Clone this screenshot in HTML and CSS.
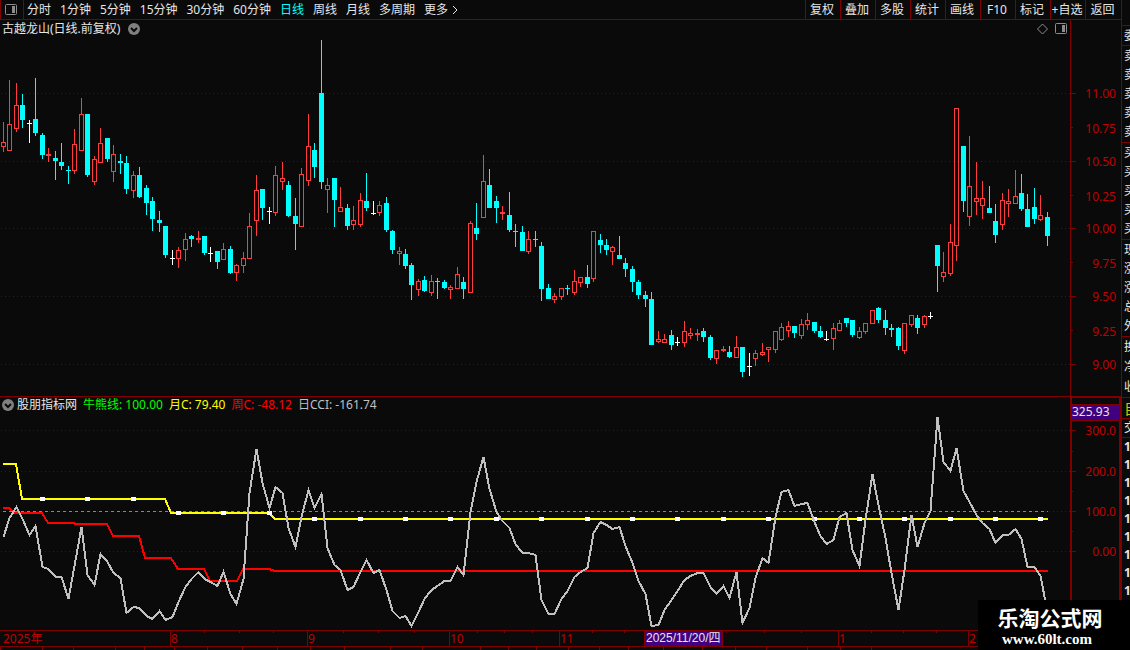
FILE: index.html
```html
<!DOCTYPE html>
<html lang="zh-CN">
<head>
    <meta charset="UTF-8">
    <meta name="viewport" content="width=device-width, initial-scale=1.0">
    <title>古越龙山 日线</title>
    <link rel="stylesheet" href="styles.css">
</head>
<body>
    <div class="main">
        <div class="toolbar">
            <button class="layout-btn" aria-label="布局">
                <svg width="12" height="12" viewBox="0 0 12 12"><rect x="0.5" y="0.5" width="11" height="10" rx="1" class="icon-line"/><rect x="7" y="2" width="3" height="7" class="icon-fill"/></svg>
            </button>
            <div class="periods">
                <button>分时</button>
                <button>1分钟</button>
                <button>5分钟</button>
                <button>15分钟</button>
                <button>30分钟</button>
                <button>60分钟</button>
                <button class="active">日线</button>
                <button>周线</button>
                <button>月线</button>
                <button>多周期</button>
                <button class="more">更多<svg width="6" height="10" viewBox="0 0 6 10"><path d="M1 1L5 5L1 9" class="arrow"/></svg></button>
            </div>
            <div class="tools">
                <button>复权</button>
                <button>叠加</button>
                <button>多股</button>
                <button>统计</button>
                <button>画线</button>
                <button>F10</button>
                <button>标记</button>
                <button>+自选</button>
                <button>返回</button>
            </div>
        </div>

        <div class="panel">
            <div class="panel-head">
                <span>古越龙山(日线.前复权)</span>
                <svg class="drop" width="12" height="12" viewBox="0 0 12 12"><circle cx="6" cy="6" r="6"/><path d="M3 5L6 8L9 5"/></svg>
                <svg class="head-icons" width="30" height="12" viewBox="0 0 30 12"><path d="M5.5 1L10.5 6L5.5 11L0.5 6Z" class="icon-line"/><rect x="18.5" y="0.5" width="11" height="10" rx="1" class="icon-line"/><rect x="25" y="2" width="3" height="7" class="icon-fill"/></svg>
            </div>
            <svg id="price" class="chart" viewBox="0 20 1121 376"></svg>
        </div>

        <div class="panel">
            <div class="panel-head indicator-head">
                <svg class="drop" width="12" height="12" viewBox="0 0 12 12"><circle cx="6" cy="6" r="6"/><path d="M3 5L6 8L9 5"/></svg>
                <span>股朋指标网</span>
                <span class="green">牛熊线: 100.00</span>
                <span class="yellow">月C: 79.40</span>
                <span class="red">周C: -48.12</span>
                <span class="gray">日CCI: -161.74</span>
            </div>
            <svg id="cci" class="chart" viewBox="0 396 1121 251"></svg>
        </div>

        <div class="tabs" id="tabs"></div>
    </div>

    <div class="quote">
        <div class="group g-head"></div>
        <div class="group g-one"><span>委</span></div>
        <div class="group g-five"><span>卖</span><span>卖</span><span>卖</span><span>卖</span><span>卖</span></div>
        <div class="group g-five"><span>买</span><span>买</span><span>买</span><span>买</span><span>买</span></div>
        <div class="group g-five"><span>现</span><span>涨</span><span>涨</span><span>总</span><span>外</span></div>
        <div class="group g-three"><span>换</span><span>净</span><span>收</span></div>
        <div class="group g-self"><span>自</span></div>
        <div class="group g-deal"><span>交</span></div>
        <div class="ticks">
            <span>1</span><span>1</span><span>1</span><span>1</span><span>1</span><span>1</span><span>1</span><span>1</span><span>1</span>
        </div>
    </div>

    <div class="watermark">
        <div class="wm-name">乐淘公式网</div>
        <div class="wm-url">www.60lt.com</div>
    </div>

    <script src="chart.js"></script>
</body>
</html>
```
FILE: styles.css
```css
* {
    box-sizing: border-box;
}

body {
    margin: 0;
    display: flex;
    height: 100vh;
    overflow: hidden;
    position: relative;
    background: #0a0a0a;
    color: #e6e6e6;
    font-family: "Noto Sans", "Noto Sans CJK SC", sans-serif;
    font-size: 12px;
    line-height: 18px;
}

button {
    padding: 0;
    border: 0;
    background: none;
    color: inherit;
    font: inherit;
    white-space: nowrap;
}

.main {
    flex: 1;
    min-width: 0;
}

/* toolbar */
.toolbar {
    display: flex;
    height: 20px;
    border-left: 1px solid #800000;
    border-bottom: 1px solid #800000;
}

.layout-btn {
    display: flex;
    align-items: center;
    justify-content: center;
    width: 23px;
    padding-right: 2px;
    border-right: 1px solid #800000;
}

.icon-line {
    fill: none;
    stroke: #8c8c8c;
    stroke-width: 1;
}

.icon-fill {
    fill: #8c8c8c;
}

.periods {
    display: flex;
    gap: 9px;
    padding-left: 3px;
}

.periods .active {
    color: #00ffff;
}

.more {
    display: flex;
    align-items: center;
    gap: 4px;
}

.arrow {
    fill: none;
    stroke: #e6e6e6;
}

.tools {
    display: flex;
    margin-left: auto;
}

.tools button {
    width: 35px;
    padding-right: 2px;
    border-left: 1px solid #800000;
}

.tools button:last-child {
    width: 36px;
}

/* chart panels */
.panel {
    position: relative;
}

.panel-head {
    position: absolute;
    top: 0;
    left: 0;
    right: 0;
    display: flex;
    align-items: center;
    gap: 8px;
    height: 18px;
    padding-left: 2px;
}

.head-icons {
    margin-left: auto;
    margin-right: 54px;
}

.indicator-head {
    right: auto;
    gap: 6px;
}

.drop circle {
    fill: #808080;
}

.drop path {
    fill: none;
    stroke: #0a0a0a;
    stroke-width: 2;
}

.indicator-head .drop {
    margin-right: -3px;
}

.green {
    color: #00ff00;
}

.yellow {
    color: #ffff00;
}

.red {
    color: #ff0000;
}

.gray {
    color: #c0c0c0;
}

.chart {
    display: block;
    width: 100%;
    height: auto;
}

.chart rect,
.chart line,
.chart polyline {
    shape-rendering: crispEdges;
}

.frame {
    stroke: #800000;
    stroke-width: 1;
}

.frame.thick {
    stroke-width: 2;
}

.dots {
    stroke: #700000;
    stroke-dasharray: 1 3;
}

.axis {
    fill: #c00000;
}

.up {
    stroke: #ff3c3c;
    fill: none;
}

.down {
    stroke: #00ffff;
    fill: #00ffff;
}

.flat {
    stroke: #ffffff;
}

.level {
    stroke: #00e600;
    stroke-dasharray: 3 3;
}

.line {
    fill: none;
    stroke-width: 2;
}

.month {
    stroke: #ffff00;
}

.week {
    stroke: #ff0000;
}

.day {
    stroke: #c0c0c0;
}

.mark {
    fill: #ffffff;
}

.mark-box {
    fill: #400080;
}

.mark-text {
    fill: #e6e6e6;
}

.mark-date {
    font-family: "Liberation Sans", "Noto Sans CJK SC", sans-serif;
}

/* bottom tabs */
.tabs {
    display: flex;
}

.tabs button {
    height: 20px;
    line-height: 16px;
    flex: none;
    overflow: hidden;
    border-right: 1px solid #800000;
}

.tabs .cyan {
    color: #00ffff;
}

/* quote column */
.quote {
    width: 9px;
    overflow: hidden;
    border-left: 1px solid #800000;
}

.group {
    display: grid;
    grid-auto-rows: 1fr;
    align-items: center;
    padding-left: 2px;
    border-bottom: 1px solid #800000;
}

.quote span {
    white-space: nowrap;
}

.g-head {
    height: 26px;
}

.g-one {
    height: 20px;
}

.g-five {
    height: 97px;
}

.g-three {
    height: 61px;
}

.g-self {
    height: 21px;
    color: #c8c800;
    font-size: 15px;
}

.g-deal {
    height: 19px;
}

.ticks {
    display: grid;
    padding-left: 2px;
    font-weight: bold;
}

.watermark {
    position: absolute;
    right: 0;
    bottom: 0;
    width: 152px;
    height: 50px;
    padding: 4px 8px 0 0;
    background: #000000;
    color: #ffffff;
    text-align: center;
    font-weight: bold;
}

.wm-name {
    font-family: "Noto Sans CJK SC", sans-serif;
    font-size: 21px;
    line-height: 26px;
}

.wm-url {
    padding-right: 6px;
    font-family: "Liberation Serif", serif;
    font-size: 15px;
    line-height: 18px;
}
```
FILE: chart.js
```js
// candles: kind (u up, d down, f flat), high, body top, body bottom, low
const candles = `
u 122 142 147 152,u 80 124 151 151,u 83 105 129 132,d 94 105 120 128,f 120 123 123 143,d 78 119 133 136,
d 133 135 155 159,u 148 154 156 162,d 151 158 161 180,d 143 162 166 170,d 166 170 171 184,u 129 144 171 174,
u 98 114 151 151,d 114 114 175 177,u 156 159 182 185,u 128 143 163 163,d 138 138 159 162,u 145 154 172 182,
d 154 161 163 174,d 156 163 189 194,u 171 175 191 198,d 167 175 197 198,d 185 188 203 215,d 197 201 219 231,
d 211 220 223 232,d 226 226 255 258,f 250 258 258 265,u 247 250 259 268,u 233 239 250 261,d 235 236 239 247,
u 231 238 240 243,d 236 236 253 255,f 247 253 253 262,d 251 251 262 269,u 243 249 260 260,d 246 249 273 274,
u 264 265 273 281,u 252 258 266 273,u 213 226 259 259,u 175 190 221 236,d 189 189 208 220,f 207 211 211 224,
u 166 175 213 216,u 162 178 182 190,d 181 185 216 217,d 198 216 224 250,u 168 174 227 227,u 114 146 181 186,
d 143 150 167 178,d 40 93 182 189,u 178 185 190 213,d 178 178 200 227,u 187 207 212 212,d 204 208 226 230,
u 206 220 225 230,u 193 200 225 227,d 173 201 208 211,f 201 213 213 215,u 201 205 213 216,d 197 203 230 232,
d 230 231 250 254,u 247 251 254 265,d 249 254 266 269,d 263 265 285 300,u 279 281 290 296,d 276 280 291 292,
u 275 281 293 296,d 278 281 282 299,d 280 282 288 289,u 285 287 290 299,u 267 274 289 289,d 277 282 289 299,
u 221 223 293 293,d 203 228 234 240,u 155 181 218 218,d 169 185 208 208,d 196 201 208 223,u 206 212 214 220,
d 192 215 230 232,d 224 231 232 247,d 226 232 251 251,u 231 239 252 254,d 231 239 240 247,d 242 246 289 301,
d 284 288 299 299,u 293 296 300 303,u 288 288 297 300,d 285 288 289 295,u 270 281 293 295,u 277 277 283 287,
d 265 277 284 288,u 231 231 279 282,d 234 240 245 253,d 239 245 250 255,u 246 247 252 265,d 236 255 259 259,
d 258 263 269 277,d 266 269 282 292,d 280 282 295 299,d 291 295 299 307,d 292 299 345 345,u 331 339 342 343,
u 334 339 343 343,d 330 335 345 350,f 337 342 342 346,u 321 331 343 347,u 328 333 336 339,u 329 333 335 341,
d 328 331 337 342,d 335 337 358 360,u 350 350 359 364,u 346 349 351 352,d 346 352 357 358,u 336 347 358 358,
d 347 347 372 377,f 353 366 366 376,u 350 353 359 366,u 343 352 355 356,u 347 347 350 362,u 331 331 350 353,
u 323 327 340 341,u 321 326 331 337,d 326 326 333 338,u 319 324 336 339,u 313 320 325 330,d 322 322 331 333,
d 326 331 337 338,f 331 339 339 341,u 323 328 339 350,u 320 323 331 331,d 318 318 323 327,d 320 320 335 337,
u 327 331 338 339,u 323 323 332 334,u 310 310 324 324,d 307 308 320 323,d 310 320 328 335,d 324 328 330 337,
d 327 328 346 350,u 323 323 351 354,u 315 315 325 327,d 315 318 328 334,u 315 316 325 328,f 312 316 316 319,
d 245 245 266 292,u 252 272 277 282,u 224 242 274 276,u 108 108 246 261,d 146 146 201 212,u 136 186 217 226,
u 162 198 202 215,u 181 198 206 219,d 186 208 213 213,d 204 221 235 243,u 193 200 225 230,u 189 201 204 217,
u 170 196 204 204,d 174 193 209 211,d 194 209 227 227,d 188 207 219 224,u 195 215 220 221,d 212 217 236 246
`.trim().split(",").map(s => s.trim().split(" "));

const cci = [
    537, 518, 507, 519, 535, 526, 567, 569, 577, 577, 599, 566, 527, 575, 585, 554, 562, 573, 578, 613,
    607, 608, 616, 619, 611, 620, 617, 602, 587, 579, 572, 579, 582, 586, 572, 594, 604, 579, 493, 449,
    483, 508, 487, 493, 528, 547, 517, 490, 508, 494, 548, 565, 570, 590, 587, 572, 560, 573, 570, 590,
    611, 618, 616, 626, 612, 599, 590, 586, 581, 581, 567, 575, 512, 482, 457, 489, 512, 521, 528, 544,
    553, 553, 555, 600, 614, 614, 599, 591, 577, 572, 568, 533, 522, 525, 529, 527, 546, 563, 581, 594,
    626, 625, 610, 600, 591, 580, 576, 573, 573, 587, 594, 586, 598, 572, 623, 608, 578, 558, 563, 517,
    492, 490, 506, 504, 503, 522, 536, 544, 540, 517, 513, 550, 566, 520, 474, 505, 538, 573, 610, 570,
    515, 547, 523, 511, 417, 462, 471, 448, 491, 502, 515, 523, 529, 543, 535, 535, 529, 539, 567, 567,
    576, 612
];

const xAt = i => Math.round(3 + i * 6.484);
const line = (x1, y1, x2, y2, cls) => `<line x1="${x1}" y1="${y1}" x2="${x2}" y2="${y2}" class="${cls}"/>`;
const text = (x, y, s, cls, anchor = "start") => `<text x="${x}" y="${y}" class="${cls}" text-anchor="${anchor}">${s}</text>`;

function drawPrice() {
    let out = line(1070.5, 20, 1070.5, 396, "frame");
    [["11.00", 93], ["10.75", 127], ["10.50", 161], ["10.25", 195], ["10.00", 228],
     ["9.75", 262], ["9.50", 296], ["9.25", 330], ["9.00", 364]].forEach(([label, y], i) => {
        if (i % 2 === 0) out += line(1, y + 0.5, 1070, y + 0.5, "dots");
        out += line(1071, y + 0.5, i % 2 ? 1073 : 1076, y + 0.5, "frame");
        out += text(1116, y + 5 + i % 2, label, "axis", "end");
    });
    candles.forEach(([kind, ...v], i) => {
        const x = xAt(i);
        const [high, top, bottom, low] = v.map(Number);
        if (kind === "f") {
            out += line(x + 0.5, high, x + 0.5, low, "flat") + line(x - 2, top + 0.5, x + 3, top + 0.5, "flat");
            return;
        }
        const cls = kind === "u" ? "up" : "down";
        if (high < top) out += line(x + 0.5, high, x + 0.5, top, cls);
        if (low > bottom) out += line(x + 0.5, bottom, x + 0.5, low, cls);
        if (bottom - top < 2) out += line(x - 2, top + 0.5, x + 3, top + 0.5, cls);
        else out += `<rect x="${x - 1.5}" y="${top + 0.5}" width="4" height="${bottom - top - 1}" class="${cls}"/>`;
    });
    document.getElementById("price").innerHTML = out;
}

function drawCci() {
    let out = line(0, 396.5, 1071, 396.5, "frame") + line(1070, 397, 1121, 397, "frame thick");
    out += line(1071, 396, 1071, 630, "frame thick") + line(1120, 396, 1120, 647, "frame thick");
    [["300.0", 430], ["200.0", 471], ["100.0", 511], ["0.00", 551]].forEach(([label, y]) => {
        out += line(1, y + 0.5, 1070, y + 0.5, "dots") + line(1072, y + 0.5, 1076, y + 0.5, "frame");
        out += text(1116, y + 5, label, "axis", "end");
    });
    [451, 491, 531].forEach(y => out += line(1072, y + 0.5, 1073, y + 0.5, "frame"));
    out += line(3, 511.5, 1048, 511.5, "level");

    out += `<polyline class="line week" points="3,508 9,508 15,513 42,513 48,523 74,523 75,524 107,524 113,536 139,536 145,558 171,558 178,569 204,569 210,581 237,581 243,569 269,569 275,571 1048,571"/>`;
    out += `<polyline class="line month" points="3,464 16,464 22,499 165,499 171,513 269,513 275,519 1048,519"/>`;
    for (let i = 6; i < cci.length; i += 7) {
        const y = i < 26 ? 499 : i < 42 ? 513 : 519;
        out += `<rect x="${xAt(i) - 2}" y="${y - 2}" width="5" height="4" class="mark"/>`;
    }
    out += `<polyline class="line day" points="${cci.map((y, i) => xAt(i) + 0.5 + "," + y).join(" ")}"/>`;

    out += `<rect x="1072" y="404" width="48" height="16" class="mark-box"/>`;
    out += line(1072, 404.5, 1120, 404.5, "frame") + line(1072, 420.5, 1120, 420.5, "frame");
    out += text(1072, 416, "325.93", "mark-text");

    // time axis
    out += line(0, 630.5, 1121, 630.5, "frame") + line(0, 646.5, 1121, 646.5, "frame");
    out += text(3, 643, "2025年", "axis");
    [["8", 170], ["9", 307], ["10", 449], ["11", 559], ["1", 838], ["2", 968]].forEach(([label, x]) => {
        out += line(x + 0.5, 631, x + 0.5, 646, "frame") + text(x + 1, 643, label, "axis");
    });
    [204, 239, 273, 343, 378, 414, 477, 504, 532, 592, 624, 726, 764, 801, 871, 903, 936].forEach(x => {
        out += line(x + 0.5, 631, x + 0.5, 633, "frame");
    });
    out += `<rect x="645" y="631" width="77" height="15" class="mark-box"/>`;
    out += line(644.5, 631, 644.5, 646, "frame") + line(722.5, 631, 722.5, 646, "frame");
    out += text(646, 642, "2025/11/20/四", "mark-text mark-date");
    document.getElementById("cci").innerHTML = out;
}

function drawTabs() {
    const edges = [0, 42, 73, 115, 144, 174, 207, 242, 277, 310, 344, 390, 422, 480, 508, 536, 568, 599, 628, 663, 702, 735, 766, 807, 840, 871];
    const labels = { 1: "指标", 25: "设置" };
    document.getElementById("tabs").innerHTML = edges.map((x, i) => {
        const width = i ? x - edges[i - 1] : 1;
        return `<button style="width: ${width}px" class="${i > 23 ? "cyan" : ""}">${labels[i] || ""}</button>`;
    }).join("");
}

drawPrice();
drawCci();
drawTabs();
```
